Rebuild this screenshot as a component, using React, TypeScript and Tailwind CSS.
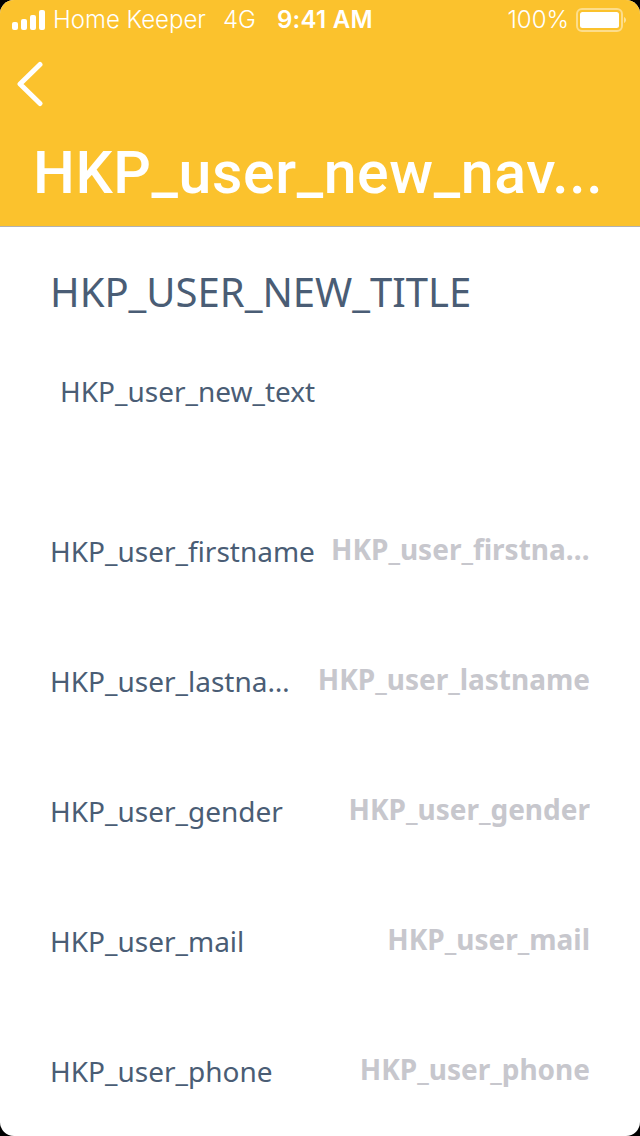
import React from "react";

const rows: { label: string; labelClass: string; valueClass: string }[] = [
  { label: "HKP_user_firstname", labelClass: "shrink-0", valueClass: "w-[259px]" },
  { label: "HKP_user_lastname", labelClass: "w-[240px]", valueClass: "shrink-0" },
  { label: "HKP_user_gender", labelClass: "", valueClass: "shrink-0" },
  { label: "HKP_user_mail", labelClass: "", valueClass: "shrink-0" },
  { label: "HKP_user_phone", labelClass: "", valueClass: "shrink-0" },
];

export default function App() {
  return (
    <div className="w-[640px] h-[1136px] bg-black">
      <div className="w-full h-full rounded-[14px] overflow-hidden bg-white font-['Noto_Sans',sans-serif]">
        <header className="bg-[#fbc22d] h-[227px] border-b border-[#b2b2b2] flex flex-col text-white">
          <div className="h-[40px] flex items-center justify-between pl-3 pr-[14px] font-['Inter',sans-serif] text-[24px]">
            <div className="flex items-center">
              <svg width="33" height="20" viewBox="0 0 33 20" fill="white">
                <rect x="0" y="12" width="6" height="8" rx="2" />
                <rect x="9" y="9" width="6" height="11" rx="2" />
                <rect x="18" y="5" width="6" height="15" rx="2" />
                <rect x="27" y="0" width="6" height="20" rx="2" />
              </svg>
              <span className="ml-[8px] font-light">Home Keeper</span>
              <span className="ml-[17px] font-light">4G</span>
              <span className="ml-[21px] font-semibold tracking-[0.3px]">9:41 AM</span>
            </div>
            <div className="flex items-center gap-[7px]">
              <span className="font-light">100%</span>
              <svg width="50" height="24" viewBox="0 0 50 24" fill="none">
                <rect x="1" y="1" width="45" height="22" rx="5" stroke="white" strokeOpacity="0.45" strokeWidth="2" />
                <rect x="4" y="4" width="39" height="16" rx="2.5" fill="white" />
                <path d="M48 9c1.2.5 2 1.6 2 3s-.8 2.5-2 3z" fill="white" fillOpacity="0.5" />
              </svg>
            </div>
          </div>
          <div className="h-[88px] pl-[15px] flex items-center">
            <svg width="30" height="46" viewBox="0 0 30 46" fill="none" stroke="white" strokeWidth="5" strokeLinecap="round" strokeLinejoin="round">
              <path d="M25 3.5 5 23l20 19.5" />
            </svg>
          </div>
          <h1 className="pl-[33px] pr-[30px] mt-[11px] font-['Roboto',sans-serif] font-medium text-[59px] tracking-[0.6px] leading-[68px] whitespace-nowrap overflow-hidden">
            HKP_user_new_nav...
          </h1>
        </header>
        <main className="pl-[50px] pr-[50px]">
          <h2 className="mt-[37px] text-[40px] leading-[56px] text-[#4a5d75]">HKP_USER_NEW_TITLE</h2>
          <p className="mt-[52px] pl-[10px] text-[28px] leading-[38px] text-[#4a5d75]">HKP_user_new_text</p>
          <div className="mt-[66px] flex flex-col">
            {rows.map((r) => (
              <div key={r.label} className="h-[130px] flex items-start justify-between pt-[56px]">
                <span className={`text-[28px] leading-[38px] text-[#4a5d75] truncate min-w-0 ${r.labelClass}`}>{r.label}</span>
                <span className={`text-[28px] leading-[38px] font-bold text-[#c7c7cd] truncate text-right -mt-[2px] ${r.valueClass}`}>{r.label}</span>
              </div>
            ))}
          </div>
        </main>
      </div>
    </div>
  );
}
